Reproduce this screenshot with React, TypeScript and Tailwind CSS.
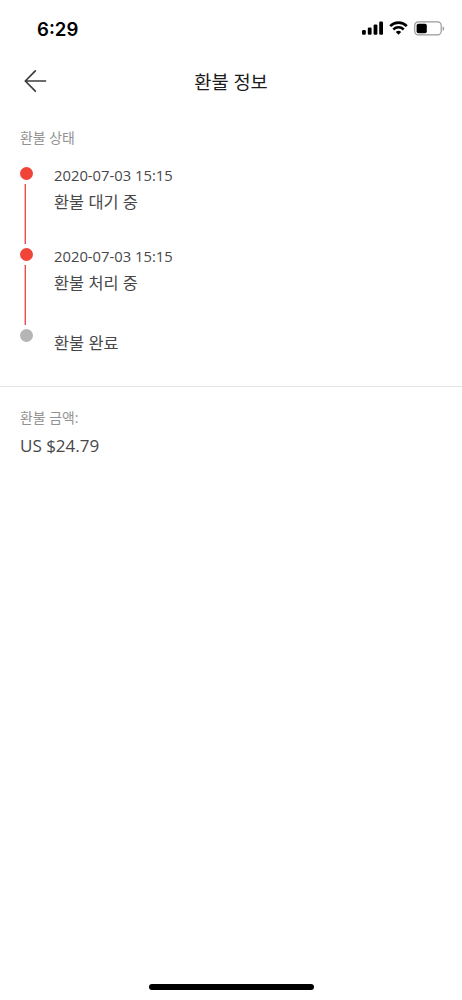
import { clsx } from 'clsx'

type Step = { label: string; date?: string; done: boolean }

const steps: Step[] = [
  { date: '2020-07-03 15:15', label: '환불 대기 중', done: true },
  { date: '2020-07-03 15:15', label: '환불 처리 중', done: true },
  { label: '환불 완료', done: false },
]

function StatusBar() {
  return (
    <div className="flex h-14 items-center justify-between pl-[37px] pr-[17px]">
      <span className="pt-[2px] font-['Inter',sans-serif] text-[18.6px] font-semibold leading-6 text-black">6:29</span>
      <div className="flex items-center gap-[6px]">
        <svg width="21" height="14" viewBox="0 0 21 14" fill="#000">
          <rect x="0" y="9" width="3.8" height="4.8" rx="1.2" />
          <rect x="5.8" y="6.5" width="3.8" height="7.3" rx="1.2" />
          <rect x="11.6" y="3.5" width="3.8" height="10.3" rx="1.2" />
          <rect x="17.2" y="0.6" width="3.8" height="13.2" rx="1.2" />
        </svg>
        <svg width="19" height="14" viewBox="0 0 19 14" fill="none" stroke="#000">
          <path d="M1.2 5.1a11.8 11.8 0 0 1 16.6 0" strokeWidth="2.7" />
          <path d="M4.3 8.5a7.4 7.4 0 0 1 10.4 0" strokeWidth="2.5" />
          <path d="M9.5 13.8 6.8 11a3.9 3.9 0 0 1 5.4 0Z" fill="#000" stroke="none" />
        </svg>
        <svg width="31" height="15" viewBox="0 0 31 15">
          <rect x="0.7" y="0.9" width="26.5" height="13" rx="3.6" fill="none" stroke="#999" strokeWidth="1.2" />
          <rect x="2.6" y="2.7" width="10.2" height="9.5" rx="1.8" fill="#000" />
          <path d="M28.7 5.2c2 .8 2 3.9 0 4.7Z" fill="#999" />
        </svg>
      </div>
    </div>
  )
}

function Header() {
  return (
    <header className="grid h-[50px] grid-cols-[1fr_auto_1fr] items-center">
      <button className="ml-6 w-[23px]" aria-label="뒤로">
        <svg width="23" height="24" viewBox="0 0 23 24" fill="none" stroke="#3c3c3c" strokeWidth="1.7" strokeLinecap="round" strokeLinejoin="round">
          <path d="M11.3 1.8 1.3 12l10 10.2M1.3 12h20.2" />
        </svg>
      </button>
      <h1 className="pt-[2px] text-[18.7px] leading-7 text-[#1c1c1c]">환불 정보</h1>
    </header>
  )
}

function TimelineStep({ step, last }: { step: Step; last: boolean }) {
  return (
    <li className={clsx('flex', !last && 'h-[81.2px]')}>
      <div className="flex w-[34px] flex-col">
        <span className={clsx('size-[13px] shrink-0 rounded-full', step.done ? 'bg-[#f04438]' : 'bg-[#b5b5b5]')} />
        {!last && <span className="mb-[4px] ml-[4px] mt-[4px] w-[2px] flex-1 border-l border-[#f5b4b2] bg-[#e9514e]" />}
      </div>
      <div className="text-[#47474a]">
        {step.date && <p className="-mt-[2px] text-[14.8px] leading-[20px]">{step.date}</p>}
        <p className={clsx('text-[16.4px] leading-6', step.date ? 'mt-[5px]' : 'mt-[2px]')}>{step.label}</p>
      </div>
    </li>
  )
}

export default function App() {
  return (
    <div className="flex h-[1000px] w-full flex-col bg-white font-['Open_Sans','Noto_Sans_CJK_KR',sans-serif]">
      <StatusBar />
      <Header />
      <main className="flex-1">
        <section className="h-[281px] border-b border-[#e4e4e4] px-5 pt-[22px]">
          <h2 className="text-[13.9px] leading-5 text-[#939393]">환불 상태</h2>
          <ol className="mt-[19px]">
            {steps.map((step, i) => (
              <TimelineStep key={i} step={step} last={i === steps.length - 1} />
            ))}
          </ol>
        </section>
        <section className="px-5 pt-[21px]">
          <h2 className="text-[13.9px] leading-5 text-[#939393]">환불 금액:</h2>
          <p className="mt-[6px] text-[17px] leading-6 text-[#47474a]">US $24.79</p>
        </section>
      </main>
      <div className="mb-[10px] ml-[149px] h-[6px] w-[165px] rounded-full bg-black" />
    </div>
  )
}
